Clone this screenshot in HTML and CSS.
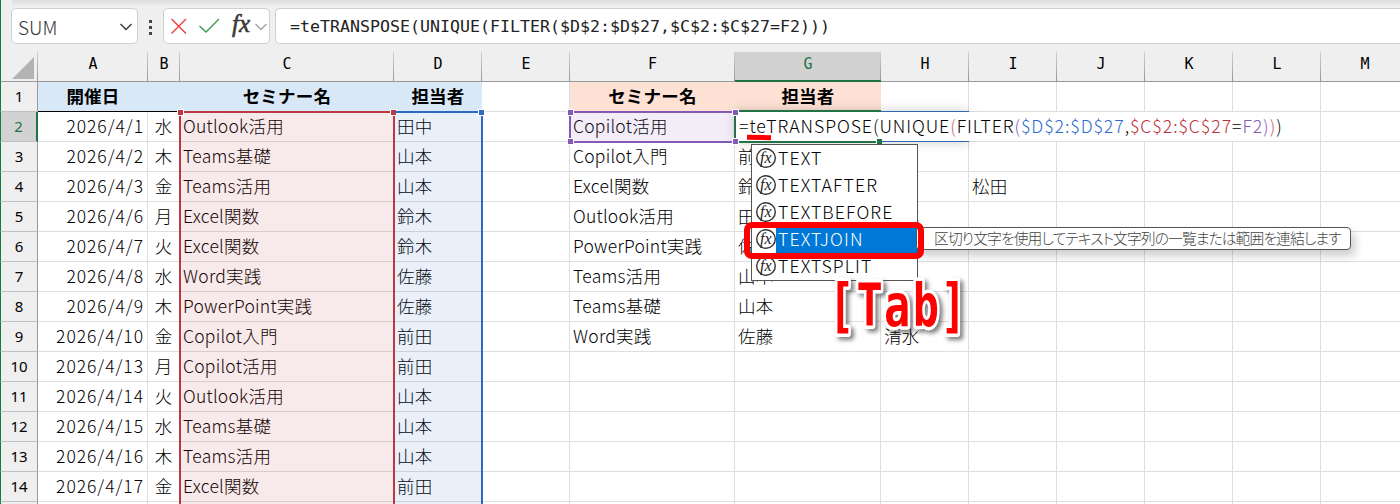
FILE: index.html
```html
<!DOCTYPE html>
<html lang="ja">
<head>
    <meta charset="UTF-8">
    <title>セミナー一覧</title>
    <link rel="stylesheet" href="styles.css">
</head>
<body>
    <div class="window">
        <div class="ribbon-edge"></div>
        <div class="formula-bar">
            <div class="name-box">
                <span>SUM</span>
                <svg width="14" height="8" viewBox="0 0 14 8"><path d="M1.5 1 L7 6.5 L12.5 1" fill="none" stroke="#333" stroke-width="1.3"/></svg>
            </div>
            <div class="dots"><i></i><i></i><i></i></div>
            <div class="formula-buttons">
                <svg width="106" height="34" viewBox="0 0 106 34">
                    <path d="M7.500 10 L22 24.500 M22 10 L7.500 24.500" fill="none" stroke="#e8403c" stroke-width="1.400"/>
                    <path d="M35.500 17 L42 23 L55 10" fill="none" stroke="#3b9b50" stroke-width="1.400"/>
                    <text class="fx" x="68" y="23">fx</text>
                    <path d="M91.500 15 L97 20.500 L102.500 15" fill="none" stroke="#a0a0a0" stroke-width="1.300"/>
                </svg>
            </div>
            <div class="formula-input">=teTRANSPOSE(UNIQUE(FILTER($D$2:$D$27,$C$2:$C$27=F2)))</div>
        </div>

        <div class="sheet">
            <table id="grid"></table>

            <div class="range range-c"><b class="h tl"></b><b class="h tr"></b></div>
            <div class="range range-d"><b class="h tr"></b></div>

            <div class="edit-back"></div>
            <div class="edit-cell"><span>=teTRANSPOSE(UNIQUE<em class="c-pink">(</em>FILTER<em class="c-purple">(</em><em class="c-blue">$D$2:$D$27</em>,<em class="c-red">$C$2:$C$27</em>=<em class="c-purple">F2)</em><em class="c-pink">)</em>)</span></div>
            <div class="edit-frame"><b class="fill-handle"></b></div>
            <div class="range range-f"><b class="h tl"></b><b class="h tr"></b><b class="h bl"></b><b class="h br"></b></div>
            <div class="underline"></div>

            <ul class="suggest">
                <li><i class="icon"><svg width="22" height="22" viewBox="0 0 22 22"><circle cx="11" cy="11" r="9.300"/><text x="5" y="15.500">fx</text></svg></i><span>TEXT</span></li>
                <li><i class="icon"><svg width="22" height="22" viewBox="0 0 22 22"><circle cx="11" cy="11" r="9.300"/><text x="5" y="15.500">fx</text></svg></i><span>TEXTAFTER</span></li>
                <li><i class="icon"><svg width="22" height="22" viewBox="0 0 22 22"><circle cx="11" cy="11" r="9.300"/><text x="5" y="15.500">fx</text></svg></i><span>TEXTBEFORE</span></li>
                <li class="active"><i class="icon"><svg width="22" height="22" viewBox="0 0 22 22"><circle cx="11" cy="11" r="9.300"/><text x="5" y="15.500">fx</text></svg></i><span>TEXTJOIN</span></li>
                <li><i class="icon"><svg width="22" height="22" viewBox="0 0 22 22"><circle cx="11" cy="11" r="9.300"/><text x="5" y="15.500">fx</text></svg></i><span>TEXTSPLIT</span></li>
            </ul>
            <div class="tooltip">区切り文字を使用してテキスト文字列の一覧または範囲を連結します</div>
            <div class="marker"></div>
            <svg class="tab-note" width="160" height="80" viewBox="0 0 160 80">
                <text transform="scale(0.74 1)" y="58" x="13 51 88 127 164">[Tab]</text>
            </svg>
        </div>
    </div>
    <script src="script.js"></script>
</body>
</html>
```
FILE: styles.css
```css
* {
    box-sizing: border-box;
}

body {
    margin: 0;
    background: #fff;
    font-family: "Noto Sans CJK JP", "Noto Sans", sans-serif;
    font-weight: 300;
    color: #000;
}

.window {
    width: 1400px;
    height: 504px;
    overflow: hidden;
    background: linear-gradient(#107c41, #107c41) left / 1px 100% no-repeat #efefef;
}

.ribbon-edge {
    height: 8px;
    margin-left: 12px;
    background: linear-gradient(#dcdcdc, #efefef 80%);
}

/* formula bar */
.formula-bar {
    display: flex;
    height: 44px;
    padding-left: 11px;
}

.name-box, .formula-buttons, .formula-input {
    height: 36px;
    background: #fff;
    border: 1px solid #d0d0d0;
    border-radius: 5px;
}

.name-box {
    display: flex;
    justify-content: space-between;
    align-items: center;
    width: 127px;
    padding: 1px 4px 0 6px;
    font-size: 19px;
    color: #333;
}

.dots {
    display: flex;
    flex-direction: column;
    gap: 3px;
    width: 25px;
    padding: 12px 0 0 11px;
}

.dots i {
    width: 3px;
    height: 3px;
    background: #444;
}

.formula-buttons {
    width: 107px;
    overflow: hidden;
}

.fx {
    font: italic 25px "Liberation Serif", serif;
    fill: #3a3a3a;
    stroke: #3a3a3a;
    stroke-width: 0.6;
}

.formula-input {
    flex: 1;
    margin-left: 5px;
    padding-left: 14px;
    border-right: 0;
    border-radius: 5px 0 0 5px;
    font: 16.61px/35px "DejaVu Sans Mono", monospace;
    color: #222;
    white-space: pre;
}

/* grid */
.sheet {
    position: relative;
    height: 452px;
}

table {
    width: 1409px;
    table-layout: fixed;
    border-collapse: separate;
    border-spacing: 0;
    background: #fff;
}

th, td {
    height: 30px;
    padding: 0;
    overflow: hidden;
    white-space: nowrap;
    line-height: 26px;
}

thead th {
    padding-bottom: 5px;
    background: linear-gradient(#d0d0d0, #999) right / 1px 100% no-repeat #efefef;
    border-bottom: 1px solid #999;
    font: 15px/22px "DejaVu Sans Mono", monospace;
}

thead th.current {
    background-color: #d2d2d2;
    border-bottom: 2px solid #217346;
    color: #217346;
}

thead th.corner {
    padding: 0;
    border-left: 1px solid #107c41;
}

.corner svg {
    display: block;
    margin: 2px 0 0 11px;
}

tbody th {
    padding-bottom: 1px;
    background: #efefef;
    border-left: 1px solid #107c41;
    border-right: 1px solid #999;
    border-bottom: 1px solid #c0c0c0;
    font: 15px/26px "Noto Sans", sans-serif;
}

tbody th.current {
    background: #d2d2d2;
    border-right: 2px solid #217346;
    color: #217346;
}

td {
    border-right: 1px solid #dedede;
    border-bottom: 1px solid #dedede;
    padding: 0 0 1px 3px;
    font-size: 17.5px;
    letter-spacing: 0.25px;
}

td.date {
    padding: 0 3px 1px 0;
    text-align: right;
    letter-spacing: 0.95px;
}

td.day {
    padding: 0 0 1px;
    text-align: center;
}

td.head {
    padding: 0 0 1px;
    border-right: 0;
    text-align: center;
    font-weight: 700;
}

td.blue {
    background: #d9e8f6;
    border-bottom-color: #000;
}

td.peach {
    background: #fce1d4;
}

/* range borders drawn over the grid */
.range {
    position: absolute;
    border: 2px solid;
}

.range-c {
    left: 179px;
    top: 59px;
    width: 216px;
    height: 420px;
    color: #be3841;
    background: rgba(190, 56, 65, 0.11);
}

.range-d {
    left: 395px;
    top: 59px;
    width: 88px;
    height: 420px;
    border-left: 0;
    color: #2f69c4;
    background: rgba(47, 105, 196, 0.1);
}

.range-f {
    left: 569px;
    top: 59px;
    width: 166px;
    height: 32px;
    border-right: 0;
    color: #8559b9;
    background: rgba(133, 89, 185, 0.11);
}

.h {
    position: absolute;
    width: 7px;
    height: 7px;
    background: currentColor;
    border: 1px solid #fff;
}

.tl, .bl {
    left: -4px;
}

.tr, .br {
    right: -4px;
}

.tl, .tr {
    top: -4px;
}

.bl, .br {
    bottom: -4px;
}

/* cell being edited */
.edit-back {
    position: absolute;
    left: 735px;
    top: 59px;
    width: 234px;
    height: 31px;
    border-top: 1px solid #2f69b4;
    border-bottom: 1px solid #2f69b4;
    box-shadow: 0 0 12px rgba(0, 0, 0, 0.2);
}

.edit-cell {
    position: absolute;
    left: 736px;
    top: 60px;
    width: 584px;
    height: 29px;
    padding-left: 3px;
    background: #fff;
    font-size: 17.7px;
    line-height: 26px;
    letter-spacing: 0.92px;
    white-space: nowrap;
}

.edit-cell em {
    font-style: normal;
}

.edit-frame {
    position: absolute;
    left: 734px;
    top: 58px;
    width: 147px;
    height: 33px;
    border: 2px solid #217346;
    border-right: 0;
}

.fill-handle {
    position: absolute;
    right: -1px;
    bottom: -3px;
    width: 6px;
    height: 5px;
    background: #217346;
    border-left: 1px solid #fff;
}

.c-blue { color: #2f69d0; }
.c-red { color: #c02f3a; }
.c-purple { color: #8559b9; }
.c-pink { color: #d8566b; }

.underline {
    position: absolute;
    left: 747px;
    top: 83px;
    width: 24px;
    height: 5px;
    background: #f00;
    transform: rotate(1deg);
}

/* function suggestions */
.suggest {
    position: absolute;
    left: 751px;
    top: 92px;
    width: 167px;
    height: 137px;
    margin: 0;
    padding: 0;
    list-style: none;
    background: #fff;
    border: 1px solid #555;
}

.suggest li {
    display: flex;
    height: 27px;
    padding-left: 3px;
    font-size: 17.7px;
    line-height: 24px;
    letter-spacing: 1.1px;
}

.suggest span {
    flex: 1;
    padding-left: 2px;
}

.suggest .active span {
    background: #0078d7;
    color: #fff;
}

.icon {
    width: 21px;
    padding-top: 2px;
    letter-spacing: 0;
}

.icon svg {
    display: block;
}

.icon circle {
    fill: #fff;
    stroke: #333;
    stroke-width: 1.4;
}

.icon text {
    font: italic 16px "Liberation Serif", serif;
    fill: #222;
}

.tooltip {
    position: absolute;
    left: 916px;
    top: 175px;
    width: 435px;
    height: 23px;
    padding-left: 17px;
    background: #fff;
    border: 1px solid #555;
    border-radius: 4px;
    box-shadow: 4px 6px 10px rgba(0, 0, 0, 0.2);
    font-size: 14.8px;
    line-height: 19px;
    font-feature-settings: "palt";
    letter-spacing: -0.92px;
    color: #444;
    white-space: nowrap;
}

.marker {
    position: absolute;
    left: 744px;
    top: 170px;
    width: 180px;
    height: 37px;
    border: 6px solid #f00;
    border-radius: 8px;
}

.tab-note {
    position: absolute;
    left: 832px;
    top: 216px;
    overflow: visible;
    filter: drop-shadow(3px 3px 2px rgba(0, 0, 0, 0.5));
}

.tab-note text {
    font: bold 59px "DejaVu Sans Mono", monospace;
    text-anchor: middle;
    fill: #f00;
    stroke: #fff;
    stroke-width: 7px;
    stroke-linejoin: round;
    paint-order: stroke;
}
```
FILE: script.js
```js
const widths = [38, 110, 32, 214, 88, 88, 165, 146, 88, 88, 88, 88, 88, 88];
const letters = 'ABCDEFGHIJKLM'.split('');

const rows = [
    ['2026/4/1', '水', 'Outlook活用', '田中', '', 'Copilot活用', ''],
    ['2026/4/2', '木', 'Teams基礎', '山本', '', 'Copilot入門', '前田', '山田'],
    ['2026/4/3', '金', 'Teams活用', '山本', '', 'Excel関数', '鈴木', '前田', '松田'],
    ['2026/4/6', '月', 'Excel関数', '鈴木', '', 'Outlook活用', '田中', '山本'],
    ['2026/4/7', '火', 'Excel関数', '鈴木', '', 'PowerPoint実践', '佐藤'],
    ['2026/4/8', '水', 'Word実践', '佐藤', '', 'Teams活用', '山本'],
    ['2026/4/9', '木', 'PowerPoint実践', '佐藤', '', 'Teams基礎', '山本'],
    ['2026/4/10', '金', 'Copilot入門', '前田', '', 'Word実践', '佐藤', '清水'],
    ['2026/4/13', '月', 'Copilot活用', '前田'],
    ['2026/4/14', '火', 'Outlook活用', '山本'],
    ['2026/4/15', '水', 'Teams基礎', '山本'],
    ['2026/4/16', '木', 'Teams活用', '山本'],
    ['2026/4/17', '金', 'Excel関数', '前田']
];
const heads = ['開催日', '', 'セミナー名', '担当者', '', 'セミナー名', '担当者'];

let html = '<colgroup>' + widths.map(w => `<col style="width:${w}px">`).join('') + '</colgroup>';

html += '<thead><tr><th class="corner"><svg width="22" height="22"><path d="M22 0 V22 H0 Z" fill="#b3b3b3"/></svg></th>';
html += letters.map(l => `<th class="${l === 'G' ? 'current' : ''}">${l}</th>`).join('');
html += '</tr></thead><tbody><tr><th>1</th>';

letters.forEach((l, i) => {
    let cls = '';
    if (i < 4) cls = 'head blue';
    if (l === 'F' || l === 'G') cls = 'head peach';
    html += `<td class="${cls}">${heads[i] || ''}</td>`;
});
html += '</tr>';

// one empty row closes the visible part of the sheet
rows.concat([[]]).forEach((row, n) => {
    const num = row.length ? n + 2 : '';
    html += `<tr><th class="${n === 0 ? 'current' : ''}">${num}</th>`;
    letters.forEach((l, i) => {
        const cls = i === 0 ? 'date' : i === 1 ? 'day' : '';
        html += `<td class="${cls}">${row[i] || ''}</td>`;
    });
    html += '</tr>';
});

document.getElementById('grid').innerHTML = html + '</tbody>';
```
